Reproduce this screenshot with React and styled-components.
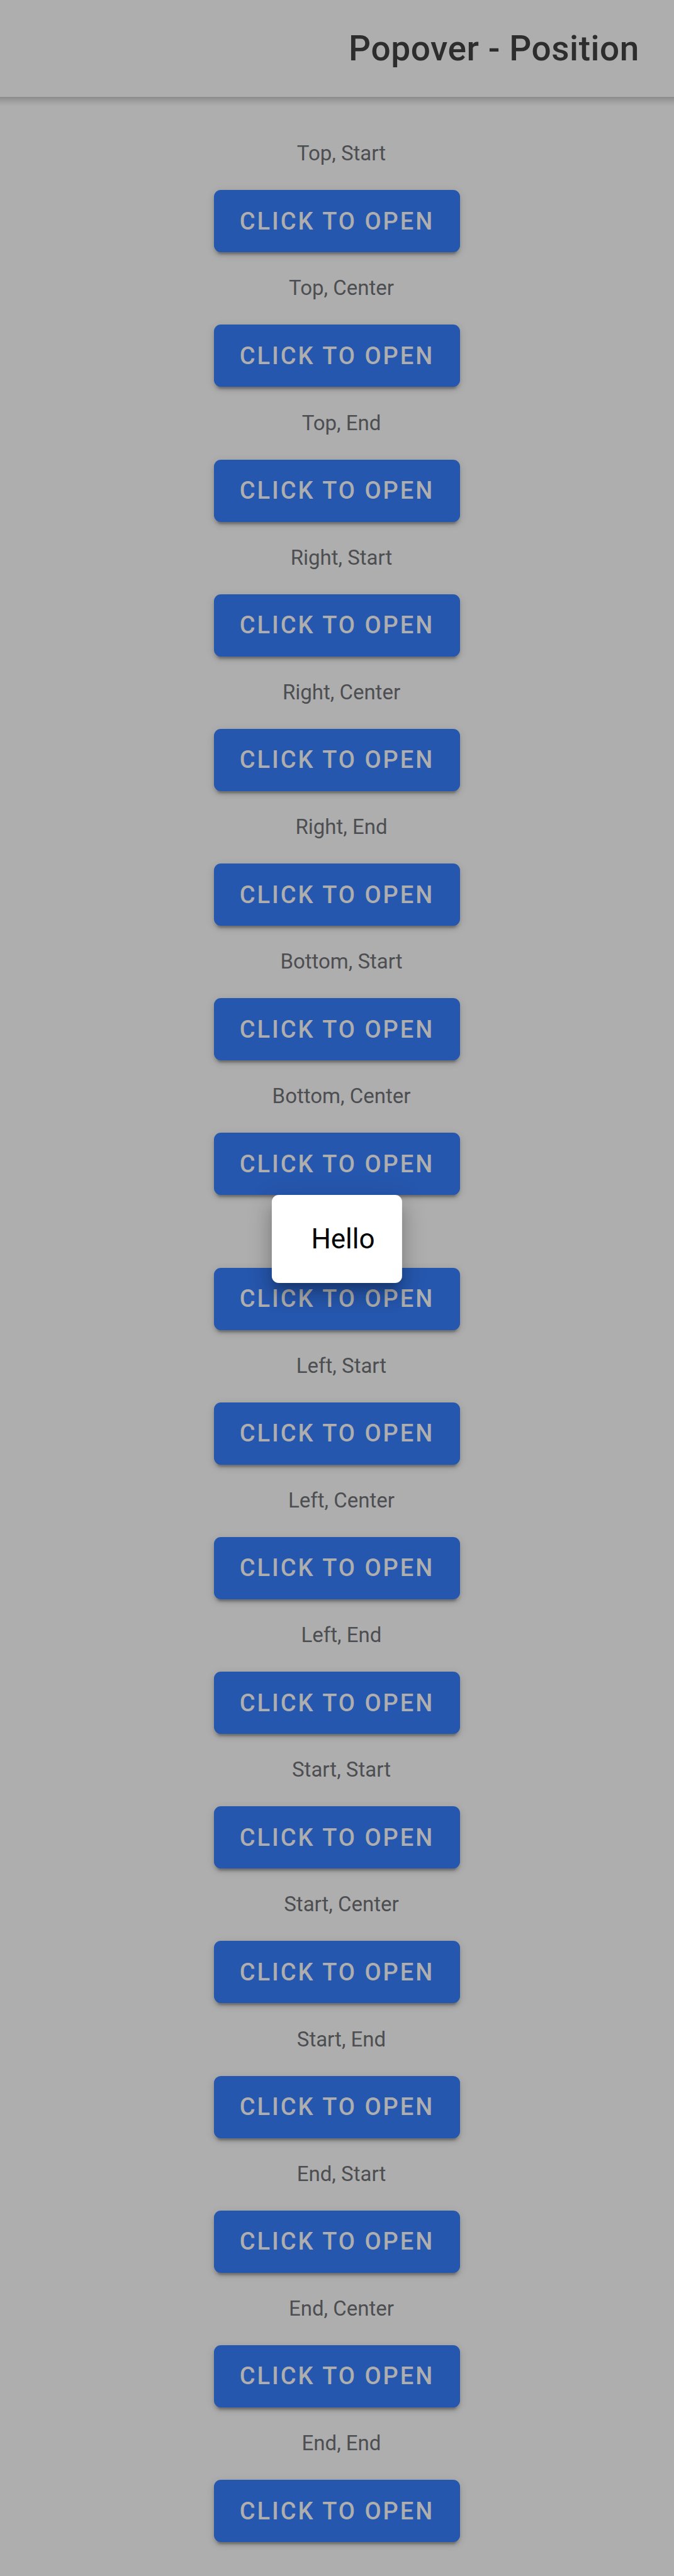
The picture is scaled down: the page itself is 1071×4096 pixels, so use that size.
import React from "react";
import styled, { createGlobalStyle } from "styled-components";

const GlobalStyle = createGlobalStyle`
  *, *::before, *::after { box-sizing: border-box; }
  body {
    margin: 0;
    background: #aeaeae;
    font-family: Roboto, "Liberation Sans", sans-serif;
    -webkit-font-smoothing: antialiased;
  }
`;

const Page = styled.div`
  display: flex;
  flex-direction: column;
  min-height: 100vh;
`;

const Header = styled.header`
  position: relative;
  display: flex;
  align-items: center;
  justify-content: flex-end;
  height: 154px;
  padding: 0 55px;

  &::after {
    content: "";
    position: absolute;
    top: 100%;
    left: 0;
    right: 0;
    height: 15px;
    background: linear-gradient(rgba(0, 0, 0, 0.2), rgba(0, 0, 0, 0.06) 60%, rgba(0, 0, 0, 0));
  }
`;

const Title = styled.h1`
  margin: 0;
  color: #2d2d2d;
  font-size: 55px;
  font-weight: 500;
  line-height: 64px;
  letter-spacing: 0.01em;
`;

const Positions = styled.main`
  flex: 1;
  display: grid;
  grid-auto-rows: 1fr;
  justify-items: center;
  padding: 33px 16px 54px;
`;

const Row = styled.section`
  display: flex;
  flex-direction: column;
  align-items: center;
  justify-content: flex-end;
  gap: 36px;
`;

const Label = styled.p`
  margin: 0;
  padding-left: 14px;
  color: #4d4e51;
  font-size: 33px;
  line-height: 44px;
  visibility: ${({ $covered }) => ($covered ? "hidden" : "visible")};
`;

const Anchor = styled.div`
  position: relative;
`;

const OpenButton = styled.button`
  display: block;
  height: 99px;
  padding: 0 41px;
  border: 0;
  border-radius: 11px;
  background: #2657ae;
  color: #aeaeae;
  font: inherit;
  font-size: 38px;
  font-weight: 500;
  letter-spacing: 3px;
  text-transform: uppercase;
  cursor: pointer;
  box-shadow:
    0 8px 3px -5px rgba(0, 0, 0, 0.2),
    0 5px 5px 0 rgba(0, 0, 0, 0.14),
    0 3px 14px 0 rgba(0, 0, 0, 0.12);
`;

const Popover = styled.div`
  position: absolute;
  z-index: 1;
  top: 100%;
  left: 50%;
  transform: translateX(-50%);
  padding: 44px 43px 44px 62px;
  border-radius: 11px;
  background: #fff;
  color: #000;
  font-size: 44px;
  line-height: 52px;
  box-shadow:
    0 14px 14px -8px rgba(0, 0, 0, 0.2),
    0 22px 27px 3px rgba(0, 0, 0, 0.14),
    0 8px 38px 5px rgba(0, 0, 0, 0.12);
`;

const sides = ["Top", "Right", "Bottom", "Left", "Start", "End"];
const alignments = ["Start", "Center", "End"];
const positions = sides.flatMap((side) => alignments.map((align) => `${side}, ${align}`));

export default function App() {
  const [open, setOpen] = React.useState("Bottom, Center");

  return (
    <>
      <GlobalStyle />
      <Page>
        <Header>
          <Title>Popover - Position</Title>
        </Header>
        <Positions>
          {positions.map((name, index) => (
            <Row key={name}>
              {/* An open popover hangs over the label of the row below it. */}
              <Label $covered={index > 0 && positions[index - 1] === open}>{name}</Label>
              <Anchor>
                <OpenButton
                  type="button"
                  aria-expanded={open === name}
                  onClick={() => setOpen(open === name ? null : name)}
                >
                  Click to Open
                </OpenButton>
                {open === name && <Popover role="dialog" aria-label={name}>Hello</Popover>}
              </Anchor>
            </Row>
          ))}
        </Positions>
      </Page>
    </>
  );
}
